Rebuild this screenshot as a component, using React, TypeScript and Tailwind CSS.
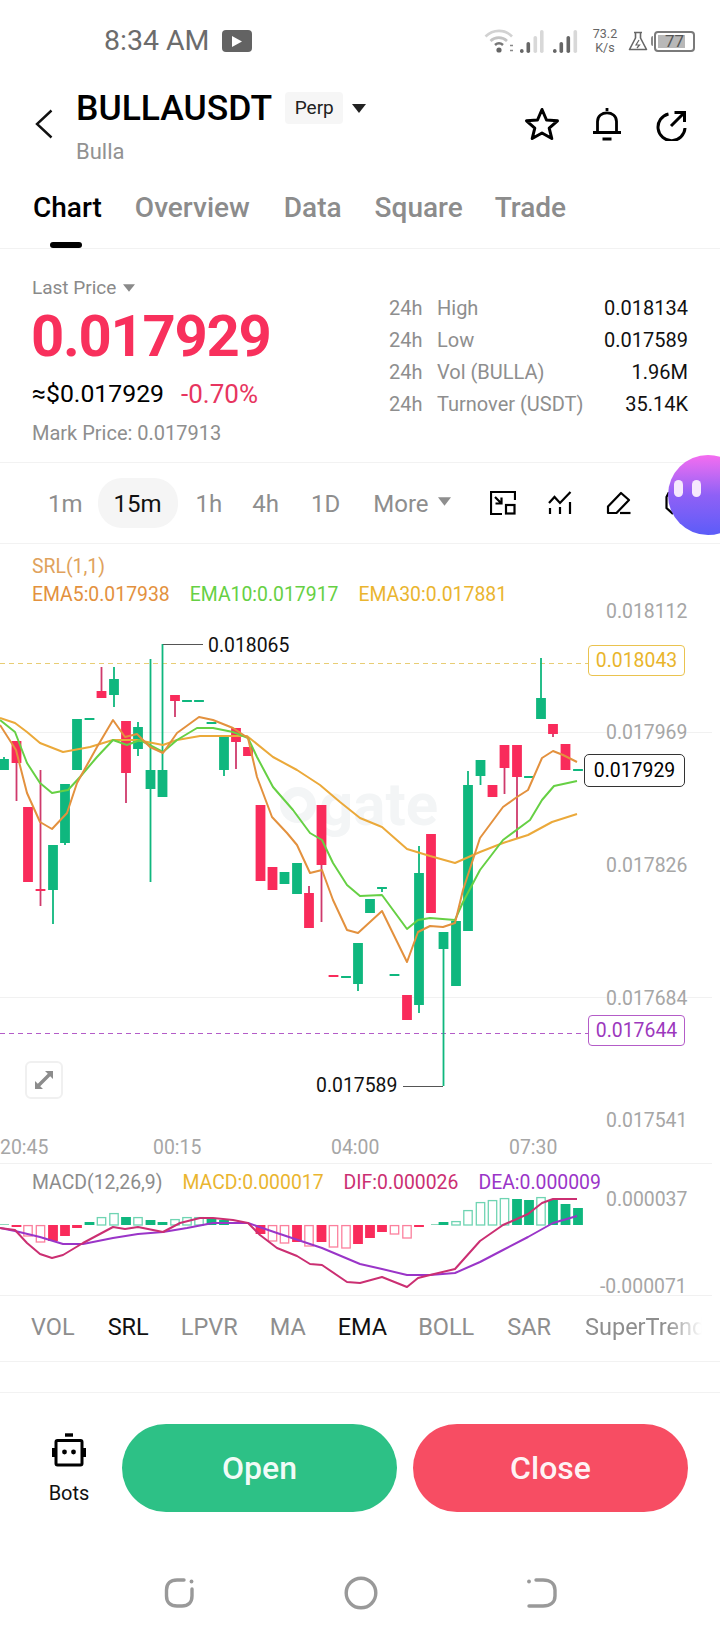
// BULLAUSDT perp chart screen
type Candle = [x: number, top: number, bottom: number, wickTop: number, wickBottom: number, up: boolean];

const GREEN = "#0fb77e";
const RED = "#f92b5b";
const WICK_RED = "#cf3a6c";

const candles: Candle[] = [
  [4, 759, 770, 757, 770, true],
  [16.5, 741, 763, 741, 801, false],
  [28, 807, 882, 807, 882, false],
  [40.5, 889, 891, 770, 906, false],
  [53, 845, 890, 845, 924, true],
  [65, 784, 843, 784, 845, true],
  [77, 719, 770, 719, 770, true],
  [89.5, 718, 720, 718, 720, true],
  [101.5, 691, 698, 667, 698, false],
  [114, 679, 695, 667, 707, true],
  [126, 721, 773, 721, 803, false],
  [138, 727, 749, 722, 756, true],
  [150.5, 770, 789, 659, 882, true],
  [162.5, 770, 797, 644, 797, true],
  [175, 695, 701, 695, 717, false],
  [187, 700, 702, 700, 702, true],
  [199, 700, 702, 700, 702, true],
  [211.5, 722, 724, 722, 724, true],
  [224, 737, 770, 737, 776, true],
  [236, 728, 742, 728, 769, false],
  [248, 747, 756, 747, 756, false],
  [260.5, 805, 881, 805, 881, false],
  [272.5, 867, 890, 867, 890, false],
  [284.5, 872, 884, 872, 884, true],
  [297, 863, 894, 863, 894, true],
  [309, 893, 928, 886, 928, false],
  [321.5, 805, 865, 805, 922, false],
  [333.5, 975, 977, 975, 977, false],
  [346, 976, 978, 976, 978, true],
  [358, 943, 984, 943, 991, true],
  [370, 899, 913, 899, 913, true],
  [382, 887, 889, 887, 892, true],
  [394.5, 974, 976, 974, 976, true],
  [407, 995, 1020, 995, 1020, false],
  [419, 873, 1005, 846, 1013, true],
  [431, 834, 913, 834, 913, false],
  [443.5, 932, 949, 932, 1086, true],
  [456, 921, 986, 921, 986, true],
  [468, 785, 931, 771, 931, true],
  [480.5, 760, 776, 760, 785, true],
  [492.5, 785, 797, 785, 797, false],
  [504.5, 745, 768, 745, 794, false],
  [517, 745, 777, 745, 838, false],
  [529, 776, 778, 776, 778, true],
  [541, 698, 719, 658, 719, true],
  [553, 724, 734, 724, 737, false],
  [565.5, 744, 770, 744, 770, false],
  [578, 769, 771, 769, 771, true],
];

const ema5 =
  "0,725 16,750 27,793 40,822 52,829 67,813 77,783 97,747 113,720 125,737 137,734 150,747 163,753 177,733 199,717 213,720 233,728 248,738 257,777 272,817 287,833 297,845 310,873 322,870 333,900 347,930 358,933 382,911 407,962 418,932 430,926 443,927 455,923 463,890 480,838 503,807 517,797 528,790 542,758 553,751 563,755 577,762";
const ema10 =
  "0,720 15,732 27,763 40,783 52,793 68,790 80,777 97,757 113,740 127,745 140,740 163,752 177,740 197,728 213,728 233,732 248,738 257,757 273,787 293,810 310,833 322,840 333,863 347,885 360,896 382,895 407,929 418,920 430,918 455,920 463,902 480,870 503,840 530,820 542,800 554,786 577,781";
const ema30 =
  "0,718 15,723 27,732 40,743 63,752 90,747 113,740 137,740 163,745 177,740 200,736 247,736 273,757 297,770 320,785 340,802 360,818 382,827 407,849 430,856 455,863 480,852 503,843 528,835 552,822 577,814";
const dif =
  "0,1228 15,1230 27,1243 40,1254 52,1258 63,1255 83,1243 113,1227 125,1229 138,1227 163,1232 180,1223 200,1218 213,1218 233,1220 248,1223 260,1235 277,1248 297,1256 310,1264 322,1265 347,1282 360,1283 382,1277 407,1287 418,1278 430,1275 455,1269 480,1241 503,1225 528,1214 542,1203 553,1199 577,1199";
const dea =
  "0,1228 15,1231 40,1237 63,1244 83,1244 113,1238 138,1234 163,1232 187,1228 213,1223 248,1223 277,1233 322,1248 360,1264 382,1269 407,1275 430,1275 455,1273 480,1262 503,1250 528,1237 553,1223 577,1216";

// x, far end of the bar from the zero line, hollow?
const bars: [number, number, boolean][] = [
  [16.5, 1227, false], [28, 1236, true], [40.5, 1242, true], [53, 1241, false], [65, 1236, false], [77, 1228, false],
  [89.5, 1222, false], [101.5, 1217, true], [114, 1213, true], [126, 1217, false], [138, 1217, true], [150.5, 1220, false],
  [162.5, 1222, false], [175, 1219, true], [187, 1217, true], [199, 1217, true], [211.5, 1219, false], [224, 1220, false],
  [260.5, 1234, false], [272.5, 1241, true], [284.5, 1243, true], [297, 1242, false], [309, 1246, true], [321.5, 1242, false],
  [333.5, 1247, true], [346, 1248, true], [358, 1244, false], [370, 1238, false], [382, 1232, false], [394.5, 1234, true],
  [407, 1238, true], [419, 1227, false], [443.5, 1222, false], [456, 1221, true], [468, 1210, true], [480.5, 1202, true],
  [492.5, 1200, true], [504.5, 1198, true], [517, 1199, false], [529, 1200, false], [541, 1197, true], [553, 1200, false],
  [565.5, 1204, false], [578, 1208, false],
];

function CandleChart() {
  return (
    <svg className="absolute inset-0" width="720" height="620" viewBox="0 544 720 620" fill="none">
      <path d="M0 732.5H712M0 997.5H712M0 1163.5H712" stroke="#f1f1f1" />
      <path d="M0 663.5H588" stroke="#e8cd74" strokeDasharray="5 4" />
      <path d="M0 1033.5H588" stroke="#b45cc8" strokeDasharray="5 4" />
      {candles.map(([x, top, bottom, wickTop, wickBottom, up]) => (
        <g key={x}>
          <rect x={x - 0.9} y={wickTop} width="1.8" height={wickBottom - wickTop} fill={up ? GREEN : WICK_RED} />
          <rect x={x - 4.9} y={top} width="9.8" height={bottom - top} fill={up ? GREEN : RED} />
        </g>
      ))}
      <polyline points={ema30} stroke="#eba93a" strokeWidth="2" strokeLinejoin="round" />
      <polyline points={ema10} stroke="#66d044" strokeWidth="2" strokeLinejoin="round" />
      <polyline points={ema5} stroke="#e3913e" strokeWidth="2" strokeLinejoin="round" />
      <path d="M163 644.5H203M403 1086.5H443" stroke="#555" strokeWidth="1.2" />
    </svg>
  );
}

function MacdChart() {
  const zero = 1225;
  return (
    <svg className="absolute inset-0" width="720" height="132" viewBox="0 1164 720 132" fill="none">
      <path d="M0 1295.5H712" stroke="#f1f1f1" />
      <path d="M0 1224.5H9M431 1224.5H441" stroke="#8fd8bc" />
      {bars.map(([x, end, hollow]) => {
        const color = end < zero ? GREEN : RED;
        const top = Math.min(end, zero);
        const h = Math.abs(end - zero);
        return hollow ? (
          <rect key={x} x={x - 4.2} y={top + 0.6} width="8.4" height={h - 0.6} stroke={color} strokeOpacity="0.6" strokeWidth="1.3" />
        ) : (
          <rect key={x} x={x - 4.9} y={top} width="9.8" height={h} fill={color} />
        );
      })}
      <polyline points={dea} stroke="#9a35c8" strokeWidth="2" strokeLinejoin="round" />
      <polyline points={dif} stroke="#cb2f72" strokeWidth="2" strokeLinejoin="round" />
    </svg>
  );
}

function StatusIcons() {
  return (
    <div className="flex items-center">
      <svg width="96" height="26" viewBox="0 0 96 26" fill="none" className="mr-[12px]">
        <path d="M1.5 8.5C9 1 21 1 28 8.5" stroke="#d2d2d2" strokeWidth="2.6" />
        <path d="M6.5 13C11 8.5 18.5 8.5 23 13" stroke="#c4c4c4" strokeWidth="2.6" />
        <path d="M11 17C13.5 14.8 16.5 14.8 19 17" stroke="#777" strokeWidth="2.6" />
        <circle cx="15" cy="22" r="2.6" fill="#666" />
        <path d="M26 17.5h3M26 22.5h3" stroke="#888" strokeWidth="1.6" />
        <rect x="36" y="21" width="3.6" height="4" rx="1.8" fill="#666" />
        <rect x="42.5" y="14" width="3.6" height="11" rx="1.8" fill="#666" />
        <rect x="49.5" y="8" width="3.6" height="17" rx="1.8" fill="#d8d8d8" />
        <rect x="56" y="2" width="3.6" height="23" rx="1.8" fill="#d8d8d8" />
        <rect x="69" y="21" width="3.6" height="4" rx="1.8" fill="#666" />
        <rect x="75.5" y="14" width="3.6" height="11" rx="1.8" fill="#666" />
        <rect x="82.5" y="8" width="3.6" height="17" rx="1.8" fill="#666" />
        <rect x="89.5" y="2" width="3.6" height="23" rx="1.8" fill="#d8d8d8" />
      </svg>
      <div className="flex w-[26px] flex-col items-center text-[12.5px] leading-[14px] text-[#666]">
        <span>73.2</span>
        <span>K/s</span>
      </div>
      <svg width="20" height="20" viewBox="0 0 20 20" fill="none" className="ml-[10px]">
        <path d="M6 1.5H14M7.5 1.5V7L1.5 18.5H18.5L12.5 7V1.5" stroke="#666" strokeWidth="1.6" strokeLinejoin="round" />
        <path d="M11 9L8 14H11.5L9 17" stroke="#666" strokeWidth="1.2" />
      </svg>
      <div className="ml-[3px] mr-[1px] h-[10px] w-[2px] rounded-l-sm bg-[#888]" />
      <div className="relative flex h-[21px] w-[41px] items-center rounded-[4px] border-2 border-[#7a7a7a] px-[2px]">
        <div className="h-[13px] w-[27px] bg-[#b8b8b8]" />
        <span className="absolute left-[9px] top-0 text-[17px] leading-[17px] text-[#555]">77</span>
      </div>
    </div>
  );
}

function Caret({ className }: { className: string }) {
  return (
    <svg className={className} width="14" height="9" viewBox="0 0 14 9">
      <path d="M0 0H14L7 9Z" fill="currentColor" />
    </svg>
  );
}

function Header() {
  return (
    <div className="flex h-[98px] items-start">
      <svg width="18" height="30" viewBox="0 0 18 30" fill="none" className="ml-[35px] mt-[27px]">
        <path d="M16.5 1.5L2 15L16.5 28.5" stroke="#111" strokeWidth="2.4" />
      </svg>
      <div className="ml-[23px] flex flex-col">
        <div className="mt-[1px] flex h-[50px] items-center">
          <span className="text-[35.5px] font-medium leading-[50px] text-black">BULLAUSDT</span>
          <span className="ml-[13px] flex h-[32px] w-[58px] items-center justify-center rounded bg-[#f6f6f6] text-[19px] text-[#222]">Perp</span>
          <Caret className="ml-[9px] text-[#222]" />
        </div>
        <span className="mt-[4px] text-[22px] leading-[30px] text-[#929292]">Bulla</span>
      </div>
      <div className="ml-auto mr-[33px] mt-[25px] flex items-start text-black">
        <svg width="36" height="34" viewBox="0 0 36 34" fill="none">
          <path d="M18 2.5L22.5 13L33.5 13.8L25.2 21.2L27.8 31.5L18 26L8.2 31.5L10.8 21.2L2.5 13.8L13.5 13Z" stroke="currentColor" strokeWidth="3" strokeLinejoin="round" />
        </svg>
        <svg width="30" height="34" viewBox="0 0 30 34" fill="none" className="ml-[32px]">
          <path d="M5.5 25V14.5C5.5 3 24.5 3 24.5 14.5V25M1 25.5H29M10.5 32H19.5M15 1V4" stroke="currentColor" strokeWidth="2.8" />
        </svg>
        <svg width="31" height="31" viewBox="0 0 31 31" fill="none" className="ml-[34px] mt-[3px]">
          <path d="M12.5 4A13.5 13.5 0 1 0 29 18" stroke="currentColor" strokeWidth="3" />
          <path d="M15 16L28 3M18.5 2.5H28.5V12" stroke="currentColor" strokeWidth="3" />
        </svg>
      </div>
    </div>
  );
}

function Tabs() {
  return (
    <div className="relative flex h-[69px] border-b border-[#f2f2f2] pl-[33px] pt-[8px] text-[28px] font-medium leading-[40px] text-[#8c8c8c]">
      <span className="text-black">Chart</span>
      <span className="ml-[33px]">Overview</span>
      <span className="ml-[34px]">Data</span>
      <span className="ml-[33px]">Square</span>
      <span className="ml-[32px]">Trade</span>
      <div className="absolute bottom-0 left-[50px] h-[6px] w-[32px] rounded-full bg-black" />
    </div>
  );
}

function Stat({ label, value }: { label: string; value: string }) {
  return (
    <div className="flex h-[32px] items-center">
      <span className="w-[48px] text-[#8e8e8e]">24h</span>
      <span className="text-[#8e8e8e]">{label}</span>
      <span className="ml-auto text-[#111]">{value}</span>
    </div>
  );
}

function PriceSummary() {
  return (
    <div className="flex h-[214px] border-b border-[#f2f2f2]">
      <div className="w-[357px] pl-[32px] pt-[27px]">
        <div className="flex h-[24px] items-center text-[19px] text-[#8a8a8a]">
          Last Price
          <Caret className="ml-[7px] h-[8px] w-[12px]" />
        </div>
        <div className="-ml-[1px] mt-[8px] text-[58px] font-bold leading-[56px] tracking-[-1.3px] text-[#f8305c]">0.017929</div>
        <div className="mt-[15px] flex h-[30px] items-center text-[24.8px]">
          <span className="text-black">≈$0.017929</span>
          <span className="ml-[17px] text-[26px] text-[#e73560]">-0.70%</span>
        </div>
        <div className="mt-[12px] text-[20px] leading-[24px] text-[#8e8e8e]">Mark Price: 0.017913</div>
      </div>
      <div className="w-[331px] pl-[32px] pt-[43px] text-[20px]">
        <Stat label="High" value="0.018134" />
        <Stat label="Low" value="0.017589" />
        <Stat label="Vol (BULLA)" value="1.96M" />
        <Stat label="Turnover (USDT)" value="35.14K" />
      </div>
    </div>
  );
}

function Intervals() {
  return (
    <div className="flex h-[81px] items-center overflow-hidden border-b border-[#f2f2f2] pl-[48px] text-[24px] text-[#8e8e8e]">
      <span className="mt-[2px]">1m</span>
      <span className="ml-[15px] flex h-[50px] w-[80px] items-center justify-center rounded-[24px] bg-[#f5f5f5] pt-[2px] text-[#111]">15m</span>
      <span className="mt-[2px] ml-[18px]">1h</span>
      <span className="mt-[2px] ml-[30px]">4h</span>
      <span className="mt-[2px] ml-[32px]">1D</span>
      <span className="mt-[2px] ml-[33px]">More</span>
      <Caret className="ml-[9px] mb-[4px] h-[9px] w-[13px]" />
      <svg width="26" height="24" viewBox="0 0 26 24" fill="none" className="ml-[39px] text-black">
        <path d="M25 9V1H1V23H12" stroke="currentColor" strokeWidth="2.2" />
        <path d="M5 6L11.5 12.5M11.5 6.5V12.5H5.5" stroke="currentColor" strokeWidth="2.2" />
        <rect x="16" y="14" width="8.5" height="8.5" stroke="currentColor" strokeWidth="2.2" />
      </svg>
      <svg width="24" height="24" viewBox="0 0 24 24" fill="none" className="ml-[32px] text-black">
        <path d="M1 12L6.5 6L12 12L22.5 1" stroke="currentColor" strokeWidth="2.2" />
        <path d="M2 17V23M12 16V23M22 11V23" stroke="currentColor" strokeWidth="2.2" />
      </svg>
      <svg width="25" height="24" viewBox="0 0 25 24" fill="none" className="ml-[34px] text-black">
        <path d="M2 22V15.5L15 2L23 9L10.5 22Z" stroke="currentColor" strokeWidth="2.2" strokeLinejoin="round" />
        <path d="M14 22H24.5" stroke="currentColor" strokeWidth="2.2" />
      </svg>
      <svg width="10" height="24" viewBox="0 0 10 24" fill="none" className="ml-[34px] shrink-0 text-black">
        <path d="M10 2H3.5L1.5 6V17L8 23" stroke="currentColor" strokeWidth="2.2" />
      </svg>
    </div>
  );
}

function PriceChart() {
  return (
    <div className="relative h-[620px]">
      <div className="absolute left-[280px] top-[241px] flex items-center text-[#f3f5f6]">
        <div className="h-[36px] w-[36px] rounded-full border-[9px] border-[#f3f5f6]" />
        <span className="ml-[3px] text-[60px] font-bold leading-[40px]">gate</span>
      </div>
      <CandleChart />
      <div className="relative pl-[32px] pt-[11px] text-[19.4px] leading-[24px]">
        <div className="text-[#e0a25c]">SRL(1,1)</div>
        <div className="mt-[4px] flex">
          <span className="text-[#e3913e]">EMA5:0.017938</span>
          <span className="ml-[20px] text-[#66d044]">EMA10:0.017917</span>
          <span className="ml-[20px] text-[#eab52f]">EMA30:0.017881</span>
        </div>
      </div>
      <span className="absolute left-[606px] top-[56px] text-[19.4px] leading-[24px] text-[#a6a6a6]">0.018112</span>
      <span className="absolute left-[606px] top-[177px] bg-white/60 text-[19.4px] leading-[24px] text-[#a6a6a6]">0.017969</span>
      <span className="absolute left-[606px] top-[310px] text-[19.4px] leading-[24px] text-[#a6a6a6]">0.017826</span>
      <span className="absolute left-[606px] top-[443px] bg-white/60 text-[19.4px] leading-[24px] text-[#a6a6a6]">0.017684</span>
      <span className="absolute left-[606px] top-[565px] text-[19.4px] leading-[24px] text-[#a6a6a6]">0.017541</span>
      <span className="absolute left-[588px] top-[101px] flex h-[31px] w-[97px] items-center justify-center rounded-[4px] border border-[#eac34f] pt-[1px] text-[19.4px] text-[#e9b52c]">0.018043</span>
      <span className="absolute left-[584px] top-[210px] flex h-[33px] w-[101px] items-center justify-center rounded-[5px] border border-[#333] bg-white pt-[1px] text-[19.4px] text-black">0.017929</span>
      <span className="absolute left-[588px] top-[471px] flex h-[31px] w-[97px] items-center justify-center rounded-[4px] border border-[#b45cc8] text-[19.4px] text-[#9c38bd]">0.017644</span>
      <span className="absolute left-[208px] top-[90px] text-[19.4px] leading-[24px] text-[#111]">0.018065</span>
      <span className="absolute left-[316px] top-[530px] text-[19.4px] leading-[24px] text-[#111]">0.017589</span>
      <button className="absolute left-[25px] top-[517px] flex h-[38px] w-[38px] items-center justify-center rounded-[6px] border-2 border-[#f0f0f0] bg-white">
        <svg width="20" height="20" viewBox="0 0 20 20" fill="#8c8c8c">
          <path d="M11 1H19V9L16.2 6.2L6.2 16.2L9 19H1V11L3.8 13.8L13.8 3.8Z" />
        </svg>
      </button>
      <span className="absolute left-0 top-[592px] text-[19.4px] leading-[24px] text-[#a6a6a6]">20:45</span>
      <span className="absolute left-[153px] top-[592px] text-[19.4px] leading-[24px] text-[#a6a6a6]">00:15</span>
      <span className="absolute left-[331px] top-[592px] text-[19.4px] leading-[24px] text-[#a6a6a6]">04:00</span>
      <span className="absolute left-[509px] top-[592px] text-[19.4px] leading-[24px] text-[#a6a6a6]">07:30</span>
    </div>
  );
}

function Macd() {
  return (
    <div className="relative h-[132px]">
      <MacdChart />
      <div className="relative flex pl-[32px] pt-[7px] text-[19.4px] leading-[24px]">
        <span className="text-[#8c8c8c]">MACD(12,26,9)</span>
        <span className="ml-[20px] text-[#eab52f]">MACD:0.000017</span>
        <span className="ml-[20px] text-[#cb2f72]">DIF:0.000026</span>
        <span className="ml-[20px] text-[#9a35c8]">DEA:0.000009</span>
      </div>
      <span className="absolute left-[606px] top-[24px] text-[19.4px] leading-[24px] text-[#a6a6a6]">0.000037</span>
      <span className="absolute left-[600px] top-[111px] text-[19.4px] leading-[24px] text-[#a6a6a6]">-0.000071</span>
    </div>
  );
}

function Indicators() {
  return (
    <div className="flex h-[66px] items-center overflow-hidden border-b border-[#f2f2f2] pb-[2px] pl-[31px] text-[23.5px] text-[#8e8e8e]">
      <span>VOL</span>
      <span className="ml-[33px] text-[#111]">SRL</span>
      <span className="ml-[32px]">LPVR</span>
      <span className="ml-[32px]">MA</span>
      <span className="ml-[32px] text-[#111]">EMA</span>
      <span className="ml-[31px]">BOLL</span>
      <span className="ml-[33px]">SAR</span>
      <span className="ml-[34px] w-[117px] shrink-0 overflow-hidden whitespace-nowrap [mask-image:linear-gradient(to_right,black_70%,transparent)]">SuperTrend</span>
    </div>
  );
}

function Actions() {
  return (
    <div className="flex h-[167px] items-start pt-[31px]">
      <div className="flex w-[122px] shrink-0 flex-col items-center pl-[16px] pt-[9px]">
        <svg width="34" height="34" viewBox="0 0 34 34" fill="none">
          <path d="M13 2H21" stroke="#000" strokeWidth="3.4" />
          <rect x="4" y="7.5" width="26" height="24.5" rx="1.5" stroke="#000" strokeWidth="3" />
          <path d="M1.5 15V24M32.5 15V24" stroke="#000" strokeWidth="3" />
          <circle cx="12.5" cy="19" r="2.4" fill="#000" />
          <circle cx="21.5" cy="19" r="2.4" fill="#000" />
        </svg>
        <span className="mt-[12px] text-[20px] leading-[28px] text-[#111]">Bots</span>
      </div>
      <button className="h-[88px] w-[275px] rounded-[44px] bg-[#2dc186] text-[32px] font-medium text-white/95">Open</button>
      <button className="ml-[16px] h-[88px] w-[275px] rounded-[44px] bg-[#f74d63] text-[32px] font-medium text-white/95">Close</button>
    </div>
  );
}

function NavBar() {
  return (
    <div className="flex h-[80px] items-start pt-[16px] text-[#999]">
      <svg width="32" height="32" viewBox="0 0 32 32" fill="none" className="ml-[164px] mt-[1px]">
        <path d="M20 3H13C6.5 3 2.5 6.5 2.5 13V19C2.5 25.5 6.5 29 13 29H18C24 29 28 25.5 28 19V12" stroke="currentColor" strokeWidth="3.4" strokeLinecap="round" />
        <circle cx="27.5" cy="4.5" r="1.9" fill="currentColor" />
      </svg>
      <svg width="34" height="34" viewBox="0 0 34 34" fill="none" className="ml-[148px]">
        <circle cx="17" cy="17" r="14.8" stroke="currentColor" strokeWidth="3.4" />
      </svg>
      <svg width="32" height="32" viewBox="0 0 32 32" fill="none" className="ml-[148px] mt-[1px]">
        <path d="M10 3H17C24 3 29 6.5 29 13V19C29 25.5 24 29 17 29H3" stroke="currentColor" strokeWidth="3.4" strokeLinecap="round" />
        <circle cx="3" cy="4.5" r="1.9" fill="currentColor" />
      </svg>
    </div>
  );
}

export default function App() {
  return (
    <div className="relative h-[1640px] w-[720px] overflow-hidden bg-white font-['Roboto',sans-serif]">
      <div className="flex h-[82px] items-center justify-between pl-[104px] pr-[25px]">
        <div className="flex items-center">
          <span className="text-[28.5px] leading-none text-[#6c6c6c]">8:34 AM</span>
          <span className="ml-[12px] flex h-[22px] w-[30px] items-center justify-center rounded-[4px] bg-[#636363]">
            <svg width="10" height="11" viewBox="0 0 10 11">
              <path d="M0 0L10 5.5L0 11Z" fill="#fff" />
            </svg>
          </span>
        </div>
        <StatusIcons />
      </div>
      <Header />
      <Tabs />
      <PriceSummary />
      <Intervals />
      <PriceChart />
      <Macd />
      <Indicators />
      <div className="h-[31px] border-b border-[#f2f2f2]" />
      <Actions />
      <NavBar />
      <div className="absolute left-[668px] top-[455px] h-[80px] w-[80px] rounded-full bg-gradient-to-b from-[#f56cf0] via-[#8f60f6] to-[#5b5cf8]">
        <div className="absolute left-[6px] top-[25px] h-[17px] w-[9px] rounded-full bg-[#f6e9fd]" />
        <div className="absolute left-[24px] top-[25px] h-[17px] w-[9px] rounded-full bg-[#f6e9fd]" />
      </div>
    </div>
  );
}
